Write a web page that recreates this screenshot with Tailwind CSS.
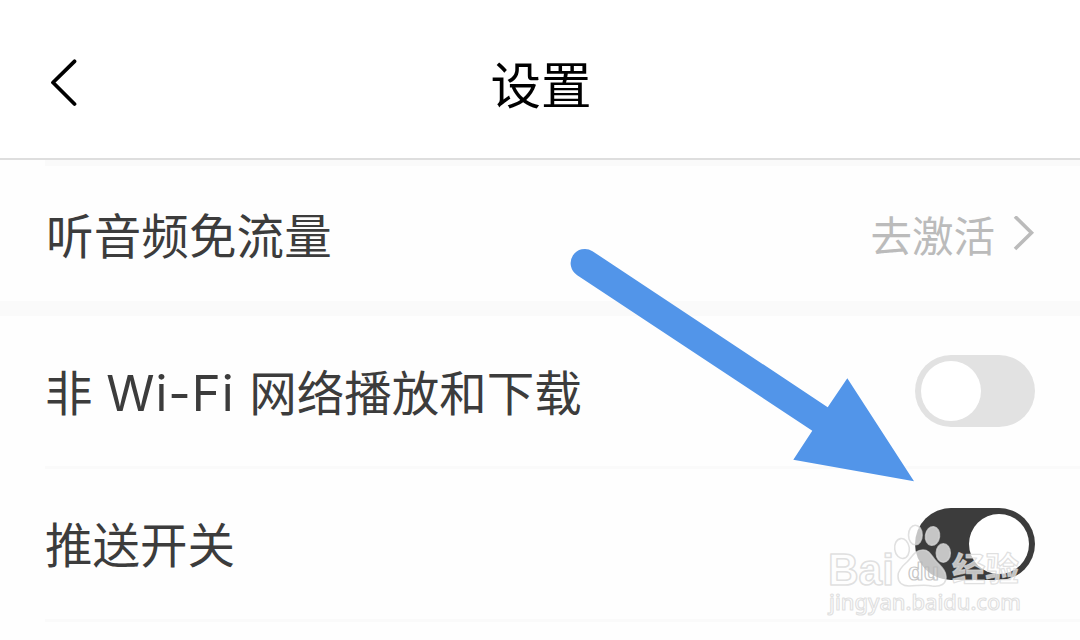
<!DOCTYPE html>
<html lang="zh-CN">
<head>
  <meta charset="UTF-8" />
  <meta name="viewport" content="width=device-width, initial-scale=1.0" />
  <title>设置</title>
  <script src="https://cdn.jsdelivr.net/npm/@tailwindcss/browser@4"></script>
</head>
<body class="bg-[#fefefe] font-['Noto_Sans_CJK_SC',sans-serif] text-[#3c3c3c]">
  <div class="relative w-[1080px] h-[640px] overflow-hidden">

    <!-- Header -->
    <header class="grid grid-cols-3 items-center h-[160px] pt-2 px-[50px] bg-white border-b-2 border-[#dedede]">
      <button aria-label="返回" class="w-7 h-12">
        <svg class="w-7 h-12" viewBox="0 0 28 48" fill="none" stroke="#000" stroke-width="3.8" stroke-linecap="round" stroke-linejoin="round">
          <path d="M24.5 2.3 3 23.5 24.5 45" />
        </svg>
      </button>
      <h1 class="pb-0.5 pl-0.5 text-center text-[50.5px] leading-[60px] text-black whitespace-nowrap">设置</h1>
    </header>

    <!-- Settings list -->
    <main>
      <div class="ml-[45px] h-1.5 bg-[#fafafa]"></div>
      <div class="flex items-center justify-between h-[135px] pl-[46px] pr-[45px]">
        <span class="text-[47.5px] leading-[60px] tracking-[0.15px]">听音频免流量</span>
        <span class="flex items-center gap-[18px] text-[#bbb]">
          <span class="text-[41.5px] leading-[52px]">去激活</span>
          <svg class="w-[22px] h-9" viewBox="0 0 22 36" fill="none" stroke="#bbb" stroke-width="3.6">
            <path d="M2 0.5 18.5 16.8 2 33" />
          </svg>
        </span>
      </div>

      <div class="h-[15px] bg-[#fafafa]"></div>

      <div class="flex items-center justify-between h-[150px] pl-[45px] pr-[45px]">
        <span class="pt-0.5 text-[47.5px] leading-[60px] whitespace-pre">非 <span class="ml-[3px] mr-1 font-[Inter] text-[49px] tracking-[1px]">Wi-Fi</span> 网络播放和下载</span>
        <span class="flex justify-start w-[120px] h-[72px] p-1.5 rounded-full bg-[#e2e2e2]">
          <span class="size-[60px] rounded-full bg-white"></span>
        </span>
      </div>
      <div class="ml-[45px] h-[3px] bg-[#fafafa]"></div>

      <div class="flex items-center justify-between h-[150px] pl-[45px] pr-[45px]">
        <span class="pb-0.5 text-[47.5px] leading-[60px]">推送开关</span>
        <span class="flex justify-end w-[120px] h-[72px] p-1.5 rounded-full bg-[#3c3c3c]">
          <span class="size-[60px] rounded-full bg-white"></span>
        </span>
      </div>
      <div class="ml-[45px] h-[3px] bg-[#fafafa]"></div>
    </main>

    <!-- Arrow and watermark, drawn over the list -->
    <svg class="absolute inset-0 w-full h-full pointer-events-none" viewBox="0 0 1080 640">
      <path fill="#5295e9" d="M592.5 251.2 827.7 407.2 847.3 378.3 914 481.3 793.3 459.8 812.3 430.7 577.2 275.2A14.2 14.2 0 0 1 592.5 251.2Z" />

      <g fill="#fff" fill-opacity="0.7" stroke="#d6d6d6" stroke-opacity="0.75" stroke-width="1.6" stroke-linejoin="round">
        <ellipse cx="902" cy="548.5" rx="7.3" ry="10" transform="rotate(-8 902 548.5)" />
        <ellipse cx="915.3" cy="535" rx="6.8" ry="9.8" />
        <ellipse cx="932.5" cy="536" rx="7" ry="9.3" transform="rotate(8 932.5 536)" />
        <ellipse cx="943.3" cy="553" rx="7" ry="9.2" />
        <path d="M923 550C915 550 912 557 907 562C901 567 898 571 898 576C898 583 903 586 909 586C917 586 924 584 932 586C941 587 946 584 946 577C946 570 940 566 935 560C931 555 929 550 923 550Z" />
        <text x="828" y="585" font-family="Liberation Sans, sans-serif" font-weight="700" font-size="44" textLength="66" lengthAdjust="spacingAndGlyphs">Bai</text>
        <text x="908" y="580" fill-opacity="0.2" stroke="#b4b4b4" stroke-width="1.2" font-family="Liberation Sans, sans-serif" font-weight="700" font-size="24" textLength="31" lengthAdjust="spacingAndGlyphs">du</text>
        <text x="952" y="581" stroke-width="1.2" font-family="Noto Sans CJK SC, sans-serif" font-weight="700" font-size="33" textLength="67" lengthAdjust="spacingAndGlyphs">经验</text>
        <text x="829" y="610" stroke-width="1.2" font-family="Noto Sans, sans-serif" font-weight="500" font-size="22.5" textLength="192" lengthAdjust="spacingAndGlyphs">jingyan.baidu.com</text>
      </g>
    </svg>
  </div>
</body>
</html>
